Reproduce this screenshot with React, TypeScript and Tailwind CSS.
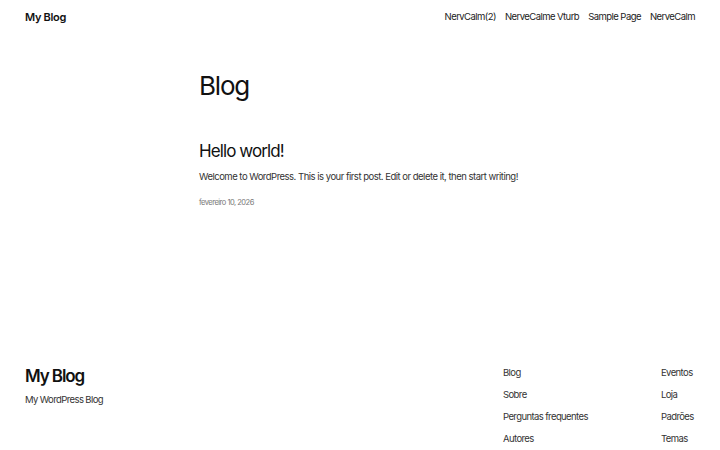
import React from 'react';

const navItems = ['NervCalm(2)', 'NerveCalme Vturb', 'Sample Page', 'NerveCalm'];
const footerColA = ['Blog', 'Sobre', 'Perguntas frequentes', 'Autores'];
const footerColB = ['Eventos', 'Loja', 'Padrões', 'Temas'];

export default function App() {
  return (
    <div className="w-[720px] h-[450px] overflow-hidden bg-white text-[#111111] flex flex-col" style={{ fontFamily: 'Inter, "Noto Sans", sans-serif' }}>
      {/* header */}
      <header className="flex items-center justify-between px-[25px] h-[35px]">
        <span className="text-[11px] font-semibold tracking-[-0.3px]">My Blog</span>
        <nav className="flex gap-[9px] text-[9.5px] tracking-[-0.55px] text-[#222]">
          {navItems.map((item) => (
            <span key={item}>{item}</span>
          ))}
        </nav>
      </header>

      {/* main */}
      <main className="pl-[199px] pr-[150px] pt-[35px] h-[321px]">
        <h1 className="text-[26px] leading-[32px] font-normal tracking-[-1.2px]">Blog</h1>
        <h2 className="mt-[38px] text-[17px] leading-[22px] font-normal tracking-[-0.9px]">Hello world!</h2>
        <p className="mt-[8px] text-[9.5px] leading-[14px] text-[#333] tracking-[-0.5px] whitespace-nowrap">
          Welcome to WordPress. This is your first post. Edit or delete it, then start writing!
        </p>
        <p className="mt-[14px] text-[7.5px] leading-[10px] text-[#777] tracking-[-0.5px]">fevereiro 10, 2026</p>
      </main>

      {/* footer */}
      <footer className="flex justify-between px-[25px] pt-[10px]">
        <div className="-mt-[1px]">
          <div className="text-[17px] leading-[22px] font-semibold tracking-[-1.1px]">My Blog</div>
          <div className="mt-[6px] text-[9.5px] leading-[14px] text-[#333] tracking-[-0.6px]">My WordPress Blog</div>
        </div>
        <div className="flex text-[9.5px] leading-[14px] tracking-[-0.6px] text-[#333]">
          <ul className="flex flex-col gap-[8px] w-[158px]">
            {footerColA.map((i) => (
              <li key={i} className="whitespace-nowrap">{i}</li>
            ))}
          </ul>
          <ul className="flex flex-col gap-[8px] w-[34px]">
            {footerColB.map((i) => (
              <li key={i} className="whitespace-nowrap">{i}</li>
            ))}
          </ul>
        </div>
      </footer>
    </div>
  );
}
